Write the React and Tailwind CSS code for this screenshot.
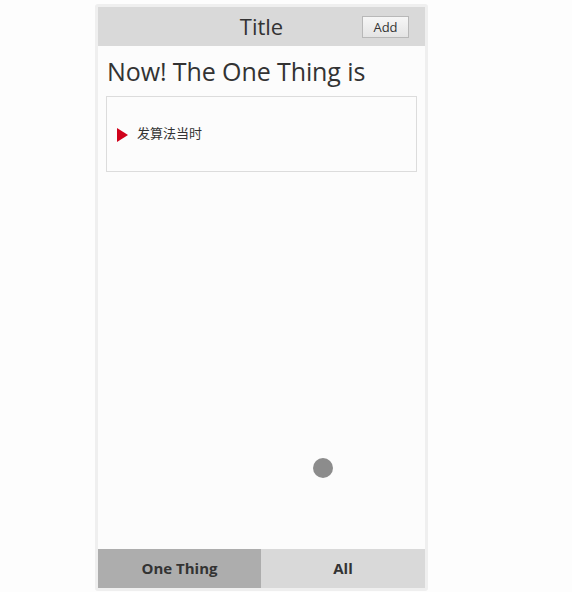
export default function App() {
  return (
    <div className="w-[572px] h-[592px] bg-[#fdfdfd] pt-[4px] pl-[95px] font-['Open_Sans','Noto_Sans_CJK_SC',sans-serif] text-[#333]">
      <div className="w-[333px] h-[587px] border-[3px] border-[#efefef] rounded-[3px] flex flex-col bg-[#fcfcfc]">
        {/* header */}
        <div className="h-[39px] bg-[#d9d9d9] relative flex items-center justify-center">
          <span className="text-[22px] leading-none -mt-[2px]">Title</span>
          <button className="absolute right-[16px] top-[9px] w-[47px] h-[22px] border border-[#b8b8b8] bg-gradient-to-b from-[#f6f6f6] to-[#e4e4e4] text-[13px] leading-none text-[#333]">
            Add
          </button>
        </div>

        {/* body */}
        <div className="flex-1 flex flex-col px-[8px]">
          <h1 className="mt-[10px] text-[25px] leading-[30px] ml-[1px] tracking-[-0.1px]">Now! The One Thing is</h1>
          <div className="mt-[10px] h-[76px] border border-[#dcdcdc] flex items-center pl-[10px]">
            <svg width="11" height="14" viewBox="0 0 11 14" className="mt-[1px]">
              <polygon points="0,0 11,7 0,14" fill="#d0021b" />
            </svg>
            <span className="ml-[9px] text-[13px]">发算法当时</span>
          </div>
          <div className="flex-1 relative">
            <div className="absolute left-[207px] top-[286px] w-[20px] h-[20px] rounded-full bg-[#8c8c8c]"></div>
          </div>
        </div>

        {/* tabs */}
        <div className="h-[39px] flex text-[15px] font-bold">
          <div className="w-[163px] bg-[#adadad] flex items-center justify-center pb-[1px]">One Thing</div>
          <div className="flex-1 bg-[#d9d9d9] flex items-center justify-center pb-[1px]">All</div>
        </div>
      </div>
    </div>
  );
}
